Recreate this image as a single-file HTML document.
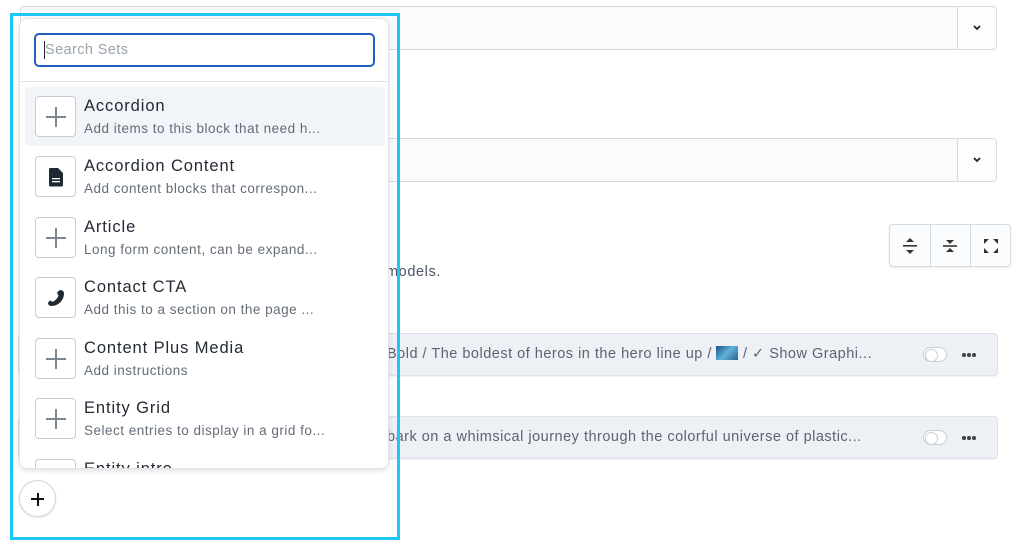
<!DOCTYPE html>
<html><head><style>
*{box-sizing:border-box;margin:0;padding:0}
body{width:1024px;height:552px;background:#fff;font-family:"Liberation Sans",sans-serif;position:relative;overflow:hidden;color:#1f2937}
.abs{position:absolute}
.dd{position:absolute;left:20px;width:977px;height:44px;border:1px solid #d6dbe1;border-radius:4px;background:#f9fbfd}
.dd .c{position:absolute;right:0;top:0;width:39px;height:42px;border-left:1px solid #d6dbe1;background:#fdfdfe;border-radius:0 4px 4px 0}
.row{position:absolute;left:18px;width:980px;height:43px;background:#edf0f4;border:1px solid #dde2e8;border-radius:4px;box-shadow:0 1px 1px rgba(0,0,0,.06)}
.row .t{position:absolute;left:368px;top:12px;font-size:14.5px;letter-spacing:0.5px;color:#5b6470;white-space:nowrap}
.tog{position:absolute;left:904px;top:13px;width:24px;height:15px;border:1px solid #c8ced6;border-radius:8px;background:#fff}
.tog:after{content:"";position:absolute;left:1px;top:1px;width:11px;height:11px;border-radius:50%;border:1px solid #c8ced6;background:#fff}
.dots{position:absolute;left:943px;top:19px;width:16px;height:4px}
.dots i{position:absolute;top:0;width:3.5px;height:3.5px;border-radius:50%;background:#444}
.pop{position:absolute;left:19px;top:18px;width:370px;height:451px;background:#fff;border:1px solid #dfe3e8;border-radius:8px;box-shadow:0 2px 6px rgba(0,0,0,.12);overflow:hidden}
.item{position:absolute;left:5px;width:360px;height:59px;border-radius:4px}
.item.h{background:#f1f4f8}
.ic{position:absolute;left:10px;top:9px;width:41px;height:41px;border:1px solid #c5ccd5;border-radius:4px;background:#fff}
.ic.p:before{content:"";position:absolute;left:10px;top:19px;width:20px;height:1.5px;background:#7d858f}
.ic.p:after{content:"";position:absolute;left:19.3px;top:10px;width:1.5px;height:20px;background:#7d858f}
.tt{position:absolute;left:59px;top:10px;font-size:16.5px;letter-spacing:0.9px;color:#232a33}
.ds{position:absolute;left:59px;top:34px;font-size:13.5px;letter-spacing:0.5px;color:#646d78;white-space:nowrap}
</style></head><body>
<div class="dd" style="top:6px"><div class="c"><svg class="abs" style="left:14px;top:17px" width="10" height="8" viewBox="0 0 10 8"><path d="M2 2l3 3 3-3" stroke="#222" stroke-width="1.8" fill="none"/></svg></div></div>
<div class="dd" style="top:138px"><div class="c"><svg class="abs" style="left:14px;top:17px" width="10" height="8" viewBox="0 0 10 8"><path d="M2 2l3 3 3-3" stroke="#222" stroke-width="1.8" fill="none"/></svg></div></div>
<div class="abs" style="left:889px;top:224px;width:122px;height:43px;border:1px solid #d6dbe1;border-radius:4px;background:#fbfcfd;box-shadow:0 1px 2px rgba(0,0,0,.08)">
 <div class="abs" style="left:40px;top:0;width:1px;height:41px;background:#d6dbe1"></div>
 <div class="abs" style="left:80px;top:0;width:1px;height:41px;background:#d6dbe1"></div>
 <svg class="abs" style="left:12px;top:12px" width="16" height="18" viewBox="0 0 16 18"><path d="M8 1l4 4H4z M8 17l4-4H4z" fill="#333"/><rect x="1" y="8" width="14" height="1.6" fill="#333"/></svg>
 <svg class="abs" style="left:52px;top:12px" width="16" height="18" viewBox="0 0 16 18"><path d="M8 7l4-4H4z M8 11l4 4H4z" fill="#333"/><rect x="1" y="8.2" width="14" height="1.6" fill="#333"/></svg>
 <svg class="abs" style="left:93px;top:13px" width="16" height="16" viewBox="0 0 16 16"><path d="M1 1h5L1 6z M15 1h-5l5 5z M1 15h5L1 10z M15 15h-5l5-5z" fill="#333"/></svg>
</div>
<div class="abs" style="left:386px;top:264px;font-size:14.5px;letter-spacing:0.6px;color:#4b5563">models.</div>
<div class="row" style="top:333px"><div class="t">Bold / The boldest of heros in the hero line up / <span style="display:inline-block;width:22px;height:14px;vertical-align:-2px;background:linear-gradient(135deg,#1c4f8a,#5fb3d9,#2a5f96)"></span> / ✓ Show Graphi...</div><div class="tog"></div><div class="dots"><i style="left:0"></i><i style="left:5px"></i><i style="left:10px"></i></div></div>
<div class="row" style="top:416px"><div class="t">bark on a whimsical journey through the colorful universe of plastic...</div><div class="tog"></div><div class="dots"><i style="left:0"></i><i style="left:5px"></i><i style="left:10px"></i></div></div>
<div class="abs" style="left:0;top:0;width:18px;height:552px;background:#fff"></div>
<div class="pop">
 <div class="abs" style="left:14px;top:14px;width:341px;height:34px;border:2px solid #1f5fbf;border-radius:5px;background:#fff">
  <div class="abs" style="left:8px;top:6px;width:1px;height:18px;background:#222"></div>
  <div class="abs" style="left:9px;top:7px;font-size:14.5px;letter-spacing:0.4px;color:#9aa3ad">Search Sets</div>
 </div>
 <div class="abs" style="left:0;top:62px;width:370px;height:1px;background:#dfe3e8"></div>
 <div class="item h" style="top:68px"><div class="ic p"></div><div class="tt">Accordion</div><div class="ds">Add items to this block that need h...</div></div>
 <div class="item" style="top:128px"><div class="ic"><svg class="abs" style="left:12px;top:10px" width="16" height="20" viewBox="0 0 16 20"><path d="M2 1h8l5 5v12a1.5 1.5 0 0 1-1.5 1.5h-11A1.5 1.5 0 0 1 1 18V2.5A1.5 1.5 0 0 1 2 1z" fill="#1f2933"/><rect x="4" y="11" width="8" height="1.3" fill="#fff"/><rect x="4" y="14" width="8" height="1.3" fill="#fff"/></svg></div><div class="tt">Accordion Content</div><div class="ds">Add content blocks that correspon...</div></div>
 <div class="item" style="top:189px"><div class="ic p"></div><div class="tt">Article</div><div class="ds">Long form content, can be expand...</div></div>
 <div class="item" style="top:249px"><div class="ic"><svg class="abs" style="left:10px;top:10px" width="20" height="20" viewBox="0 0 20 20"><path d="M14 2c2.5 0 4 1.5 4 3.5 0 7-6 12.5-12.5 12.5C3.5 18 2 16.8 2 15l1.5-2.5 3.5 1.2c2.5-1.3 4.5-3.5 5.5-6L11 4.5z" fill="#1f2933"/></svg></div><div class="tt">Contact CTA</div><div class="ds">Add this to a section on the page ...</div></div>
 <div class="item" style="top:310px"><div class="ic p"></div><div class="tt">Content Plus Media</div><div class="ds">Add instructions</div></div>
 <div class="item" style="top:370px"><div class="ic p"></div><div class="tt">Entity Grid</div><div class="ds">Select entries to display in a grid fo...</div></div>
 <div class="item" style="top:431px"><div class="ic"></div><div class="tt">Entity intro</div></div>
</div>
<div class="abs" style="left:19px;top:480px;width:37px;height:37px;border:1px solid #cfd5dc;border-radius:50%;background:#fff;box-shadow:0 1px 2px rgba(0,0,0,.1)">
 <div class="abs" style="left:11px;top:17px;width:13px;height:2px;background:#111"></div>
 <div class="abs" style="left:16.5px;top:11.5px;width:2px;height:13px;background:#111"></div>
</div>
<div class="abs" style="left:10px;top:13px;width:390px;height:527px;border:3px solid #1ec6f6"></div>
</body></html>
